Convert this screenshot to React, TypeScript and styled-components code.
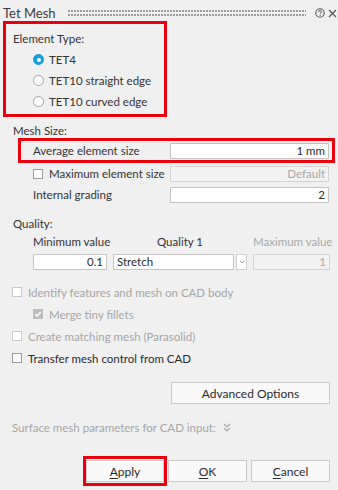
import React from "react";
import styled, { createGlobalStyle } from "styled-components";

const GlobalStyle = createGlobalStyle`
  html, body {
    margin: 0;
    padding: 0;
    background: #f0f0f0;
  }
  body {
    font-family: Lato, "Liberation Sans", Arial, sans-serif;
    font-size: 11.5px;
    color: #333333;
  }
`;

const RED = "#e8000d";

const Panel = styled.div`
  width: 338px;
  height: 490px;
  display: flex;
  flex-direction: column;
  overflow: hidden;
  white-space: nowrap;
`;

const TitleBar = styled.div`
  height: 21px;
  box-sizing: border-box;
  padding: 5px 1px 0 3px;
  display: flex;
  align-items: center;
`;

const Title = styled.span`
  font-size: 13px;
  color: #3c3c3c;
  line-height: 16px;
`;

const Grip = styled.div`
  flex: 1;
  height: 7px;
  margin: 0 9px 0 12px;
  background-image: radial-gradient(circle at 1px 1px, #9c9c9c 0.8px, transparent 1.1px);
  background-size: 3px 4px;
  background-position: 0 0;
`;

const TitleIcons = styled.div`
  display: flex;
  align-items: center;
  gap: 3px;
`;

const Highlight = styled.div<{ $width: number; $height: number; $left: number }>`
  box-sizing: border-box;
  width: ${(p) => p.$width}px;
  height: ${(p) => p.$height}px;
  margin-left: ${(p) => p.$left}px;
  border: 3px solid ${RED};
`;

const TypeBox = styled(Highlight)`
  padding: 5px 0 0 7px;
`;

const GroupLabel = styled.div`
  line-height: 20px;
`;

const SectionLabel = styled.div<{ $top: number }>`
  margin-top: ${(p) => p.$top}px;
  padding-left: 13px;
  line-height: 14px;
`;

const RadioRow = styled.label`
  height: 21px;
  display: flex;
  align-items: center;
  gap: 5px;
  padding-left: 20px;
`;

const Radio = styled.span<{ $on?: boolean }>`
  width: 11px;
  height: 11px;
  box-sizing: border-box;
  border-radius: 50%;
  border: 1px solid ${(p) => (p.$on ? "#1b9de0" : "#a3a3a3")};
  background: ${(p) => (p.$on ? "#1b9de0" : "#ffffff")};
  display: flex;
  align-items: center;
  justify-content: center;
  &::after {
    content: "";
    width: 4px;
    height: 4px;
    border-radius: 50%;
    background: #ffffff;
    display: ${(p) => (p.$on ? "block" : "none")};
  }
`;

const FieldRow = styled.div<{ $indent: number; $height: number }>`
  height: ${(p) => p.$height}px;
  padding-left: ${(p) => p.$indent}px;
  display: grid;
  grid-template-columns: 137px 159px;
  align-items: center;
`;

const FieldLabel = styled.div`
  display: flex;
  align-items: center;
  gap: 6px;
`;

const Field = styled.div<{ $disabled?: boolean; $align?: string }>`
  height: 16px;
  box-sizing: border-box;
  border: 1px solid ${(p) => (p.$disabled ? "#d4d4d4" : "#c4c4c4")};
  background: ${(p) => (p.$disabled ? "#f2f2f2" : "#ffffff")};
  color: ${(p) => (p.$disabled ? "#a9a9a9" : "#2b2b2b")};
  text-align: ${(p) => p.$align || "right"};
  line-height: 14px;
  padding: 0 3px;
  overflow: hidden;
`;

const Box = styled.span<{ $disabled?: boolean; $checked?: boolean }>`
  width: 10px;
  height: 10px;
  box-sizing: border-box;
  flex: none;
  border: 1px solid ${(p) => (p.$checked ? "#bdbdbd" : p.$disabled ? "#c9c9c9" : "#9a9a9a")};
  background: ${(p) => (p.$checked ? "#bdbdbd" : "#ffffff")};
  display: flex;
  align-items: center;
  justify-content: center;
`;

const QualityGrid = styled.div`
  margin-top: 4px;
  padding-left: 33px;
  display: grid;
  grid-template-columns: 74px 134px 77px;
  column-gap: 6px;
  row-gap: 5px;
`;

const ColHead = styled.div<{ $muted?: boolean }>`
  line-height: 14px;
  text-align: center;
  color: ${(p) => (p.$muted ? "#a9a9a9" : "#333333")};
`;

const Select = styled.div`
  display: flex;
  gap: 2px;
  height: 16px;
`;

const SelectValue = styled(Field)`
  flex: 1;
`;

const SelectArrow = styled.div`
  width: 11px;
  box-sizing: border-box;
  border: 1px solid #cfcfcf;
  background: #ffffff;
  display: flex;
  align-items: center;
  justify-content: center;
`;

const CheckRow = styled.div<{ $indent: number; $muted?: boolean; $top?: number }>`
  height: 22px;
  margin-top: ${(p) => p.$top || 0}px;
  padding-left: ${(p) => p.$indent}px;
  display: flex;
  align-items: center;
  gap: 6px;
  color: ${(p) => (p.$muted ? "#a6a6a6" : "#2b2b2b")};
`;

const ButtonRow = styled.div<{ $top: number }>`
  margin-top: ${(p) => p.$top}px;
  padding-right: 8px;
  display: flex;
  justify-content: flex-end;
  align-items: center;
`;

const Button = styled.button<{ $width: number; $gap?: number }>`
  width: ${(p) => p.$width}px;
  height: 22px;
  margin-left: ${(p) => p.$gap || 0}px;
  box-sizing: border-box;
  border: 1px solid #c9c9c9;
  background: #f9f9f9;
  color: #2b2b2b;
  font-family: inherit;
  font-size: 12px;
  padding: 0;
  u {
    text-decoration-thickness: 1px;
    text-underline-offset: 2px;
  }
`;

const ApplyBox = styled(Highlight)`
  padding: 0;
  display: flex;
  align-items: center;
`;

const Collapsed = styled.div`
  margin-top: 13px;
  height: 20px;
  padding-left: 12px;
  display: flex;
  align-items: center;
  gap: 7px;
  color: #a6a6a6;
`;

const HelpIcon = () => (
  <svg width="10" height="10" viewBox="0 0 10 10">
    <circle cx="5" cy="5" r="4.2" fill="none" stroke="#555" strokeWidth="1.1" />
    <path d="M3.6 4c0-.9.6-1.4 1.4-1.4s1.4.5 1.4 1.2c0 .9-1.2 1-1.2 1.9" fill="none" stroke="#555" strokeWidth="1" />
    <circle cx="5.2" cy="7.2" r=".6" fill="#555" />
  </svg>
);

const CloseIcon = () => (
  <svg width="9" height="9" viewBox="0 0 9 9">
    <path d="M1 1l7 7M8 1L1 8" stroke="#555" strokeWidth="1.2" />
  </svg>
);

const Tick = () => (
  <svg width="8" height="8" viewBox="0 0 8 8">
    <path d="M1.2 4.2l1.8 1.8 3.8-4" fill="none" stroke="#ffffff" strokeWidth="1.4" />
  </svg>
);

const SmallChevron = () => (
  <svg width="6" height="4" viewBox="0 0 6 4">
    <path d="M0.8 0.8L3 3l2.2-2.2" fill="none" stroke="#9a9a9a" strokeWidth="1" />
  </svg>
);

const DoubleChevron = () => (
  <svg width="8" height="9" viewBox="0 0 8 9">
    <path d="M1 1l3 3 3-3M1 5l3 3 3-3" fill="none" stroke="#a6a6a6" strokeWidth="1.1" />
  </svg>
);

const elementTypes = ["TET4", "TET10 straight edge", "TET10 curved edge"];

export default function App() {
  return (
    <>
      <GlobalStyle />
      <Panel>
        <TitleBar>
          <Title>Tet Mesh</Title>
          <Grip />
          <TitleIcons>
            <HelpIcon />
            <CloseIcon />
          </TitleIcons>
        </TitleBar>

        <TypeBox $width={164} $height={96} $left={3}>
          <GroupLabel>Element Type:</GroupLabel>
          {elementTypes.map((t, i) => (
            <RadioRow key={t}>
              <Radio $on={i === 0} />
              {t}
            </RadioRow>
          ))}
        </TypeBox>

        <SectionLabel $top={7}>Mesh Size:</SectionLabel>
        <Highlight $width={317} $height={25} $left={18}>
          <FieldRow $indent={12} $height={19}>
            <FieldLabel>Average element size</FieldLabel>
            <Field>1 mm</Field>
          </FieldRow>
        </Highlight>
        <FieldRow $indent={33} $height={21}>
          <FieldLabel>
            <Box />
            Maximum element size
          </FieldLabel>
          <Field $disabled>Default</Field>
        </FieldRow>
        <FieldRow $indent={33} $height={21}>
          <FieldLabel>Internal grading</FieldLabel>
          <Field>2</Field>
        </FieldRow>

        <SectionLabel $top={12}>Quality:</SectionLabel>
        <QualityGrid>
          <ColHead>Minimum value</ColHead>
          <ColHead>Quality 1</ColHead>
          <ColHead $muted>Maximum value</ColHead>
          <Field>0.1</Field>
          <Select>
            <SelectValue $align="left">Stretch</SelectValue>
            <SelectArrow>
              <SmallChevron />
            </SelectArrow>
          </Select>
          <Field $disabled>1</Field>
        </QualityGrid>

        <CheckRow $indent={12} $muted $top={11}>
          <Box $disabled />
          Identify features and mesh on CAD body
        </CheckRow>
        <CheckRow $indent={33} $muted>
          <Box $checked>
            <Tick />
          </Box>
          Merge tiny fillets
        </CheckRow>
        <CheckRow $indent={12} $muted>
          <Box $disabled />
          Create matching mesh (Parasolid)
        </CheckRow>
        <CheckRow $indent={12}>
          <Box />
          Transfer mesh control from CAD
        </CheckRow>

        <ButtonRow $top={13}>
          <Button $width={159}>Advanced Options</Button>
        </ButtonRow>

        <Collapsed>
          Surface mesh parameters for CAD input:
          <DoubleChevron />
        </Collapsed>

        <ButtonRow $top={19}>
          <ApplyBox $width={84} $height={30} $left={0}>
            <Button $width={78}>
              <u>A</u>pply
            </Button>
          </ApplyBox>
          <Button $width={79} $gap={1}>
            <u>O</u>K
          </Button>
          <Button $width={79} $gap={4}>
            <u>C</u>ancel
          </Button>
        </ButtonRow>
      </Panel>
    </>
  );
}
